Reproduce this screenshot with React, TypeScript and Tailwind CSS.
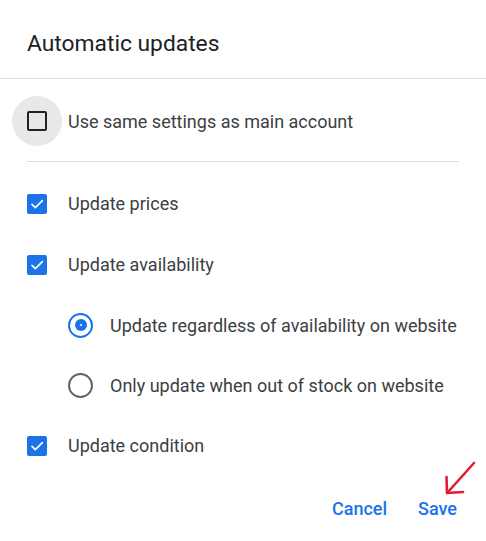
import React from 'react';

const font = { fontFamily: 'Roboto, "Noto Sans", Arial, sans-serif' };

function Checkbox({ checked }: { checked: boolean }) {
  if (checked) {
    return (
      <span className="flex h-[20px] w-[20px] shrink-0 items-center justify-center rounded-[2px] bg-[#1a73e8]">
        <svg width="16" height="16" viewBox="0 0 24 24" fill="none">
          <path d="M4.5 12.5l5 5L20 7" stroke="white" strokeWidth="2.6" strokeLinecap="round" strokeLinejoin="round" />
        </svg>
      </span>
    );
  }
  return <span className="block h-[20px] w-[20px] shrink-0 rounded-[2px] border-2 border-[#202124]" />;
}

function Radio({ checked }: { checked: boolean }) {
  return (
    <span
      className={`flex h-[25px] w-[25px] shrink-0 items-center justify-center rounded-full border-[2.5px] ${
        checked ? 'border-[#1a73e8]' : 'border-[#5f6368]'
      }`}
    >
      {checked && (
        <span className="flex h-[12px] w-[12px] items-center justify-center rounded-full bg-[#1a73e8]">
          <span className="h-[2px] w-[2px] rounded-full bg-white" />
        </span>
      )}
    </span>
  );
}

function CheckRow({ label }: { label: string }) {
  return (
    <div className="flex h-[61px] items-center gap-[21px]">
      <Checkbox checked />
      <span className="text-[18px] text-[#3c4043]">{label}</span>
    </div>
  );
}

function RadioRow({ label, checked }: { label: string; checked?: boolean }) {
  return (
    <div className="flex h-[60px] items-center gap-[17px] pl-[41px]">
      <Radio checked={!!checked} />
      <span className="text-[18px] text-[#3c4043]">{label}</span>
    </div>
  );
}

export default function App() {
  return (
    <div className="relative h-[541px] w-[486px] overflow-hidden bg-white" style={font}>
      <div className="flex h-[79px] items-center border-b border-[#dadce0] pl-[27px] pt-[10px]">
        <h2 className="text-[22.8px] text-[#202124]">Automatic updates</h2>
      </div>

      <div className="px-[27px]">
        <div className="flex h-[83px] items-center border-b border-[#dadce0] pt-[2px]">
          <div className="-ml-[15px] mr-[6px] flex h-[50px] w-[50px] shrink-0 items-center justify-center rounded-full bg-[#e8e8e8]">
            <Checkbox checked={false} />
          </div>
          <span className="text-[18px] text-[#3c4043]">Use same settings as main account</span>
        </div>

        <div className="pt-[11px]">
          <CheckRow label="Update prices" />
          <CheckRow label="Update availability" />
          <RadioRow label="Update regardless of availability on website" checked />
          <RadioRow label="Only update when out of stock on website" />
          <CheckRow label="Update condition" />
        </div>
      </div>

      <div className="flex justify-end gap-[31px] pr-[29px] pt-[19px]">
        <button className="text-[18px] font-medium text-[#1a73e8]">Cancel</button>
        <button className="text-[18px] font-medium text-[#1a73e8]">Save</button>
      </div>

      <svg className="absolute left-[440px] top-[456px]" width="44" height="44" viewBox="0 0 44 44" fill="none">
        <path d="M34 7 L8 36" stroke="#e41b35" strokeWidth="2.6" strokeLinecap="round" />
        <path d="M6.5 21 L7 37 L23 36" stroke="#e41b35" strokeWidth="2.6" strokeLinecap="round" strokeLinejoin="round" />
      </svg>
    </div>
  );
}
